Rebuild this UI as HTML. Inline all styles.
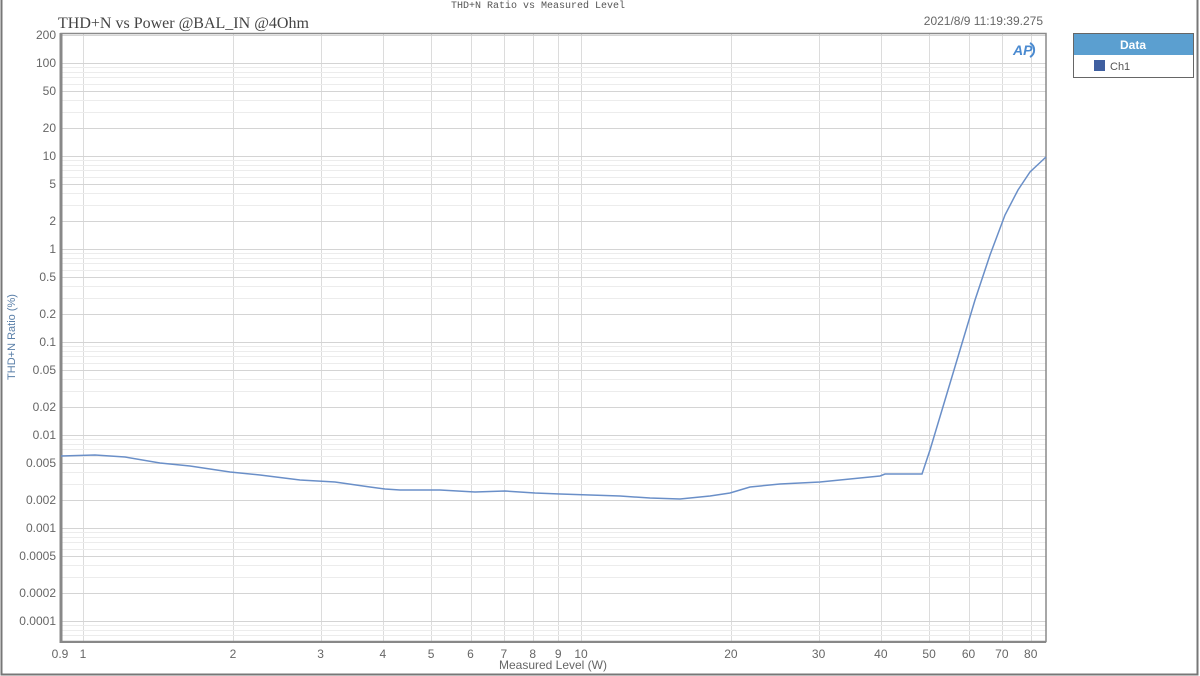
<!DOCTYPE html>
<html><head><style>
body{margin:0;width:1200px;height:676px;background:#fff;overflow:hidden;font-family:"Liberation Sans",sans-serif;}
</style></head><body>
<svg width="1200" height="676" xmlns="http://www.w3.org/2000/svg" style="position:absolute;left:0;top:0">
<rect x="1.5" y="-2" width="1196" height="676.5" fill="#fff" stroke="#777" stroke-width="2"/>
<text x="538" y="8" font-family="Liberation Mono,monospace" font-size="10" fill="#555" text-anchor="middle">THD+N Ratio vs Measured Level</text>
<text x="58" y="28" font-family="Liberation Serif,serif" font-size="16" fill="#444">THD+N vs Power @BAL_IN @4Ohm</text>
<text x="1043" y="25" font-size="12" fill="#666" text-anchor="end">2021/8/9 11:19:39.275</text>
<g id="grid" stroke-width="1"></g>
<rect x="61" y="33.5" width="985" height="608" fill="none" stroke="#8a8a8a" stroke-width="1.5"/>
<line x1="61" y1="33" x2="61" y2="643" stroke="#888" stroke-width="3"/>
<line x1="60" y1="642" x2="1046" y2="642" stroke="#888" stroke-width="2"/>
<g id="lbl" font-size="12" fill="#666"></g>
<text x="553" y="669" font-size="12" fill="#666" text-anchor="middle">Measured Level (W)</text>
<text transform="translate(15,337) rotate(-90)" font-size="11" fill="#5a7fa8" text-anchor="middle">THD+N Ratio (%)</text>
<polyline fill="none" stroke="#6a8fc8" stroke-width="1.5" points="61,456 95,455 125,457 160,463 190,466 230,472 260,475 300,480 335,482 370,487 385,489 400,490 440,490 475,492 505,491 535,493 560,494 620,496 650,498 680,499 710,496 730,493 750,487 780,484 820,482 850,479 880,476 885,474 922,474 930,450 945,400 960,350 975,300 990,255 1005,215 1018,190 1030,172 1046,157"/>
<text x="1013" y="55" font-size="14" font-weight="bold" font-style="italic" fill="#4a8ad0">AP</text>
<path d="M1030 43 a8 8 0 0 1 0 14" fill="none" stroke="#4a8ad0" stroke-width="2"/>
<rect x="1073.5" y="33.5" width="120" height="44" fill="#fff" stroke="#666"/>
<rect x="1074" y="34" width="119" height="21" fill="#5b9fd0"/>
<text x="1133" y="49" font-size="12" font-weight="bold" fill="#fff" text-anchor="middle">Data</text>
<rect x="1094" y="60" width="11" height="11" fill="#3f5fa0"/>
<text x="1110" y="70" font-size="11" fill="#555">Ch1</text>
</svg>
<script>
var ns="http://www.w3.org/2000/svg",g=document.getElementById("grid"),l=document.getElementById("lbl");
function X(v){return 83+498*Math.log10(v)}function Y(v){return 249-93*Math.log10(v)}
function ln(x1,y1,x2,y2,c){var e=document.createElementNS(ns,"line");e.setAttribute("x1",x1);e.setAttribute("y1",y1);e.setAttribute("x2",x2);e.setAttribute("y2",y2);e.setAttribute("stroke",c);g.appendChild(e);}
function tx(x,y,s,a){var e=document.createElementNS(ns,"text");e.setAttribute("x",x);e.setAttribute("y",y);e.setAttribute("text-anchor",a);e.textContent=s;l.appendChild(e);}
[1,10].forEach(function(d){for(var i=1;i<10;i++){var v=i*d;if(v>86)continue;var x=Math.round(X(v))+.5;ln(x,34,x,641,"#dcdcdc");}});
var xl=[1,2,3,4,5,6,7,8,9,10,20,30,40,50,60,70,80];xl.forEach(function(v){tx(X(v),658,String(v),"middle")});tx(60,658,"0.9","middle");
for(var e=-5;e<3;e++){for(var i=1;i<10;i++){var v=i*Math.pow(10,e);var y=Y(v);if(y<34||y>641)continue;var m=(i==1||i==2||i==5);ln(62,Math.round(y)+.5,1046,Math.round(y)+.5,m?"#d4d4d4":"#ececec");}}
var yl=["200","100","50","20","10","5","2","1","0.5","0.2","0.1","0.05","0.02","0.01","0.005","0.002","0.001","0.0005","0.0002","0.0001"];
yl.forEach(function(s){tx(56,Y(parseFloat(s))+4,s,"end")});
</script>
</body></html>
